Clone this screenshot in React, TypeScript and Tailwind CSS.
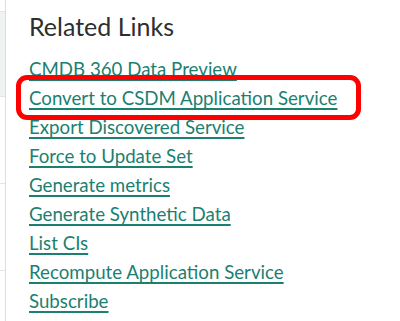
import React from "react";

const links = [
  "CMDB 360 Data Preview",
  "Convert to CSDM Application Service",
  "Export Discovered Service",
  "Force to Update Set",
  "Generate metrics",
  "Generate Synthetic Data",
  "List CIs",
  "Recompute Application Service",
  "Subscribe",
];

export default function App() {
  return (
    <div className="flex h-[321px] w-[400px] overflow-hidden bg-white" style={{ fontFamily: "Lato, 'Open Sans', sans-serif" }}>
      {/* left edge of the neighbouring panel */}
      <div className="flex w-[6px] shrink-0 flex-col border-r border-[#dcdfe0]">
        <div className="h-[11px]" />
        <div className="h-[86px] border-y border-[#e3e6e7] bg-[#eef3f4]" />
        <div className="h-[87px] border-b border-[#e3e6e7]" />
        <div className="h-[87px] border-b border-[#e3e6e7]" />
      </div>

      <div className="flex-1 pl-[23px] pt-[11px]">
        <h2 className="text-[25px] leading-[30px] text-[#2e2e2e]">Related Links</h2>
        <ul className="mt-[14px] flex flex-col">
          {links.map((l, i) => (
            <li key={l} className="relative text-[18.7px] leading-[29px]">
              <a href="#" className="text-[#1b7f71] underline decoration-[1.5px] underline-offset-[3px]">
                {l}
              </a>
              {i === 1 && (
                <span className="pointer-events-none absolute -left-[13px] top-[-9px] h-[45px] w-[345px] rounded-[11px] border-[5px] border-solid border-[#ff0000]" />
              )}
            </li>
          ))}
        </ul>
      </div>
    </div>
  );
}
